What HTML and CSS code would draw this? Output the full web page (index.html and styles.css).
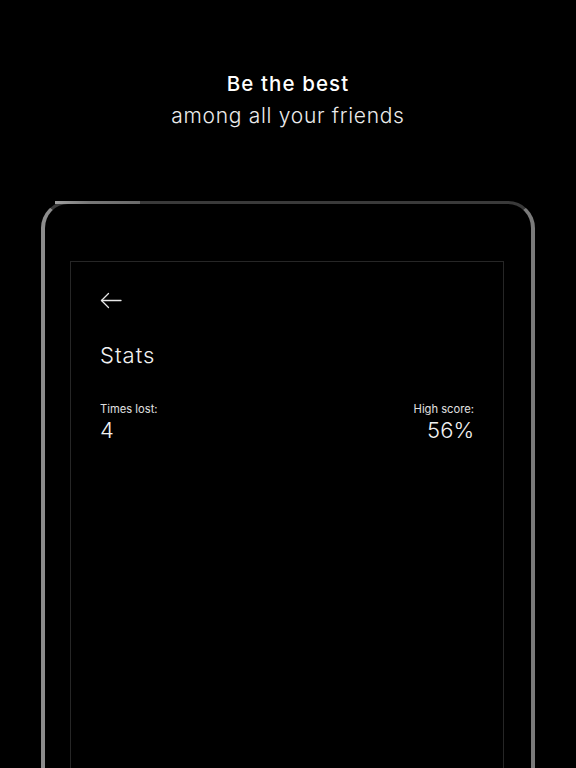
FILE: index.html
```html
<!DOCTYPE html>
<html>
<head>
<meta charset="utf-8">
<link rel="stylesheet" href="styles.css">
</head>
<body>
<div class="page">
  <header class="header">
    <div class="title">Be the best</div>
    <div class="subtitle">among all your friends</div>
  </header>
  <div class="device">
    <div class="screen">
      <svg class="back" width="22" height="17" viewBox="0 0 22 17" fill="none" stroke="#e8e8e8" stroke-width="1.3" stroke-linecap="round" stroke-linejoin="round">
        <path d="M21 8.5H1.5"/>
        <path d="M8.5 1.5L1.5 8.5L8.5 15.5"/>
      </svg>
      <div class="heading">Stats</div>
      <div class="stats">
        <div class="stat">
          <div class="label">Times lost:</div>
          <div class="value">4</div>
        </div>
        <div class="stat stat-right">
          <div class="label">High score:</div>
          <div class="value">56%</div>
        </div>
      </div>
    </div>
  </div>
</div>
</body>
</html>
```
FILE: styles.css
```css
html, body {
  margin: 0;
  padding: 0;
  background: #000;
  height: 768px;
  overflow: hidden;
}
.page {
  width: 576px;
  height: 768px;
  overflow: hidden;
  font-family: Inter, "Noto Sans", sans-serif;
  color: #fff;
}
.header {
  padding-top: 68px;
  text-align: center;
}
.title {
  font-size: 20.5px;
  line-height: 32px;
  font-weight: 500;
  letter-spacing: 1.1px;
  color: #fff;
}
.subtitle {
  font-size: 21px;
  line-height: 32px;
  font-weight: 300;
  letter-spacing: 0.7px;
  color: #ececec;
}
.device {
  position: relative;
  margin: 69px 0 0 41px;
  width: 486px;
  height: 700px;
  border: 4px solid #555;
  border-top-width: 3px;
  border-top-color: #3a3a3a;
  border-left-color: #8c8c8c;
  border-right-color: #7a7a7a;
  border-radius: 27px;
  background: #000;
}
.device::before {
  content: "";
  position: absolute;
  top: -3px;
  left: 10px;
  width: 85px;
  height: 3px;
  background: linear-gradient(90deg, #a0a0a0, #777 40%, #6a6a6a);
}
.screen {
  margin: 57px 0 0 25px;
  height: 700px;
  border: 1px solid #262626;
  padding: 30px 29px 0 29px;
  box-sizing: border-box;
  width: 434px;
}
.back {
  display: block;
}
.heading {
  margin-top: 32px;
  font-size: 22px;
  line-height: 28px;
  font-weight: 300;
  letter-spacing: 1px;
  color: #f2f2f2;
}
.stats {
  margin-top: 32px;
  display: flex;
  justify-content: space-between;
}
.stat-right {
  text-align: right;
}
.label {
  font-size: 11.2px;
  line-height: 16px;
  color: #e0e0e0;
}
.value {
  font-size: 22px;
  line-height: 26px;
  font-weight: 300;
  color: #f2f2f2;
}
```
